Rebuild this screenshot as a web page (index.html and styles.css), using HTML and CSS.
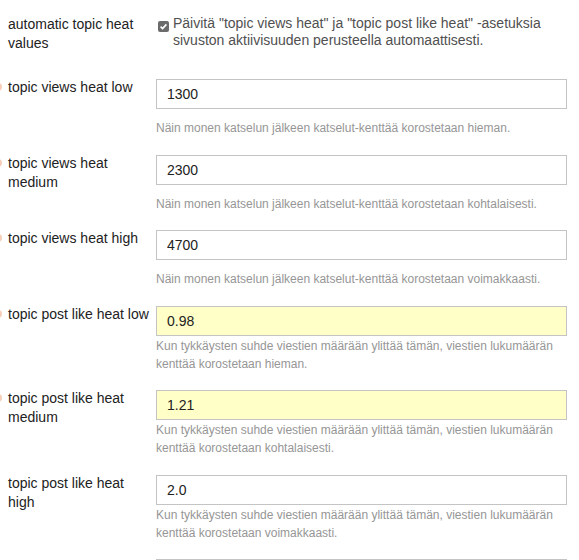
FILE: index.html
```html
<!DOCTYPE html>
<html lang="fi">
<head>
    <meta charset="UTF-8">
    <meta name="viewport" content="width=device-width, initial-scale=1.0">
    <title>Settings</title>
    <link rel="stylesheet" href="styles.css">
</head>
<body>
    <div class="settings">
        <div class="setting setting-first">
            <div class="setting-label">automatic topic heat values</div>
            <div class="setting-value">
                <label class="checkbox">
                    <span class="check-box">
                        <svg width="11" height="11" viewBox="0 0 11 11"><path d="M2.6 5.6 L4.6 7.6 L8.4 3.4" fill="none" stroke="#fff" stroke-width="1.6"/></svg>
                    </span>
                    <span class="check-text">Päivitä "topic views heat" ja "topic post like heat" -asetuksia sivuston aktiivisuuden perusteella automaattisesti.</span>
                </label>
            </div>
        </div>

        <div class="setting">
            <div class="setting-label overridden">topic views heat low</div>
            <div class="setting-value">
                <input type="text" value="1300">
                <div class="desc desc-spaced">Näin monen katselun jälkeen katselut-kenttää korostetaan hieman.</div>
            </div>
        </div>

        <div class="setting">
            <div class="setting-label overridden">topic views heat medium</div>
            <div class="setting-value">
                <input type="text" value="2300">
                <div class="desc desc-spaced">Näin monen katselun jälkeen katselut-kenttää korostetaan kohtalaisesti.</div>
            </div>
        </div>

        <div class="setting">
            <div class="setting-label overridden">topic views heat high</div>
            <div class="setting-value">
                <input type="text" value="4700">
                <div class="desc desc-spaced">Näin monen katselun jälkeen katselut-kenttää korostetaan voimakkaasti.</div>
            </div>
        </div>

        <div class="setting">
            <div class="setting-label overridden">topic post like heat low</div>
            <div class="setting-value">
                <input type="text" class="changed" value="0.98">
                <div class="desc">Kun tykkäysten suhde viestien määrään ylittää tämän, viestien lukumäärän kenttää korostetaan hieman.</div>
            </div>
        </div>

        <div class="setting">
            <div class="setting-label overridden">topic post like heat medium</div>
            <div class="setting-value">
                <input type="text" class="changed" value="1.21">
                <div class="desc">Kun tykkäysten suhde viestien määrään ylittää tämän, viestien lukumäärän kenttää korostetaan kohtalaisesti.</div>
            </div>
        </div>

        <div class="setting">
            <div class="setting-label">topic post like heat high</div>
            <div class="setting-value">
                <input type="text" value="2.0">
                <div class="desc">Kun tykkäysten suhde viestien määrään ylittää tämän, viestien lukumäärän kenttää korostetaan voimakkaasti.</div>
            </div>
        </div>

        <div class="setting">
            <div class="setting-label"></div>
            <div class="setting-value">
                <input type="text" value="">
            </div>
        </div>
    </div>
</body>
</html>
```

FILE: styles.css
```css
body {
    margin: 0;
    font-family: 'Liberation Sans', Arial, sans-serif;
    font-size: 14px;
    color: #222;
    background-color: #fff;
}
.settings {
    padding: 14.5px 12px 0 8px;
}
.setting {
    display: grid;
    grid-template-columns: 145px 1fr;
    column-gap: 3px;
    margin-bottom: 16.5px;
}
.setting-first {
    margin-bottom: 25.5px;
}
.setting-label {
    position: relative;
    line-height: 19px;
}
.setting-label.overridden::before {
    content: '';
    position: absolute;
    left: -14px;
    top: 5px;
    width: 8px;
    height: 8px;
    border-radius: 50%;
    background-color: #f8cdb8;
}
.checkbox {
    display: flex;
    align-items: flex-start;
    gap: 4px;
    line-height: 17px;
    color: #505050;
}
.check-box {
    flex: none;
    width: 11px;
    height: 11px;
    margin: 6px 0 0 2px;
    border-radius: 2px;
    background-color: #6b6b6b;
}
.check-box svg {
    display: block;
}
input {
    display: block;
    box-sizing: border-box;
    width: 100%;
    height: 30px;
    margin: 1px 0 0;
    padding: 0 10px;
    border: 1px solid #c4c4c4;
    border-radius: 0;
    font-family: inherit;
    font-size: 14px;
    color: #222;
    background-color: #fff;
}
input.changed {
    background-color: #ffffc7;
}
.desc {
    margin-top: 1px;
    font-size: 12px;
    line-height: 18px;
    color: #969696;
}
.desc-spaced {
    margin-top: 10px;
}
```
